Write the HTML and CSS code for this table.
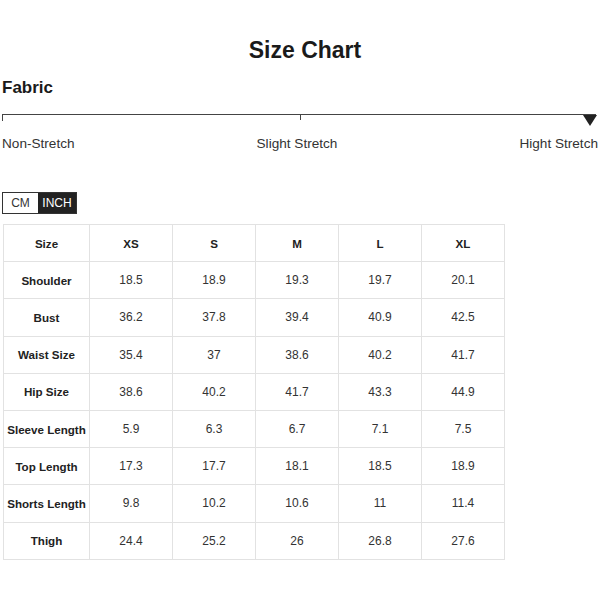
FILE: index.html
```html
<!DOCTYPE html>
<html>
<head>
<meta charset="utf-8">
<link rel="stylesheet" href="styles.css">
</head>
<body>
<div class="page">
  <h1 class="title">Size Chart</h1>
  <h2 class="fabric">Fabric</h2>
  <div class="scale">
    <span class="tick tick-left"></span>
    <span class="tick tick-mid"></span>
    <span class="marker"></span>
  </div>
  <div class="labels">
    <span>Non-Stretch</span>
    <span>Slight Stretch</span>
    <span>Hight Stretch</span>
  </div>
  <div class="toggle">
    <span class="opt">CM</span>
    <span class="opt active">INCH</span>
  </div>
  <table class="chart">
    <tr><th>Size</th><th>XS</th><th>S</th><th>M</th><th>L</th><th>XL</th></tr>
    <tr><th>Shoulder</th><td>18.5</td><td>18.9</td><td>19.3</td><td>19.7</td><td>20.1</td></tr>
    <tr><th>Bust</th><td>36.2</td><td>37.8</td><td>39.4</td><td>40.9</td><td>42.5</td></tr>
    <tr><th>Waist Size</th><td>35.4</td><td>37</td><td>38.6</td><td>40.2</td><td>41.7</td></tr>
    <tr><th>Hip Size</th><td>38.6</td><td>40.2</td><td>41.7</td><td>43.3</td><td>44.9</td></tr>
    <tr><th>Sleeve Length</th><td>5.9</td><td>6.3</td><td>6.7</td><td>7.1</td><td>7.5</td></tr>
    <tr><th>Top Length</th><td>17.3</td><td>17.7</td><td>18.1</td><td>18.5</td><td>18.9</td></tr>
    <tr><th>Shorts Length</th><td>9.8</td><td>10.2</td><td>10.6</td><td>11</td><td>11.4</td></tr>
    <tr><th>Thigh</th><td>24.4</td><td>25.2</td><td>26</td><td>26.8</td><td>27.6</td></tr>
  </table>
</div>
</body>
</html>
```
FILE: styles.css
```css
html, body {
  margin: 0;
  padding: 0;
  background: #fff;
}
body {
  font-family: "Liberation Sans", Arial, sans-serif;
  color: #222;
}
.page {
  padding: 0 2px;
}
.title {
  margin: 0;
  padding: 37px 0 0 10px;
  font-size: 23px;
  line-height: 26px;
  font-weight: bold;
  text-align: center;
  color: #1a1a1a;
}
.fabric {
  margin: 0;
  padding-top: 15px;
  font-size: 17px;
  line-height: 20px;
  font-weight: bold;
  color: #1a1a1a;
}
.scale {
  position: relative;
  margin-top: 16px;
  margin-right: 2px;
  height: 10px;
  border-top: 1px solid #444;
}
.tick {
  position: absolute;
  top: 0;
  width: 1px;
  height: 6px;
  background: #444;
}
.tick-left { left: 0; }
.tick-mid { left: 298px; height: 5px; }
.marker {
  position: absolute;
  right: -1px;
  top: 0;
  width: 0;
  height: 0;
  border-left: 7px solid transparent;
  border-right: 7px solid transparent;
  border-top: 11px solid #222;
}
.labels {
  display: flex;
  justify-content: space-between;
  margin-top: 11px;
  font-size: 13.6px;
  line-height: 16px;
  color: #333;
}
.toggle {
  display: inline-flex;
  margin-top: 40px;
  border: 1px solid #333;
  font-size: 12px;
  line-height: 20px;
}
.opt {
  display: block;
  width: 35px;
  text-align: center;
  color: #333;
  background: #fff;
}
.opt.active {
  width: 38px;
  background: #222;
  color: #fff;
}
.chart {
  margin-top: 10px;
  margin-left: 1px;
  border-collapse: collapse;
  table-layout: fixed;
  width: 502px;
}
.chart th, .chart td {
  border: 1px solid #e2e2e2;
  height: 36.2px;
  padding: 0;
  text-align: center;
  font-size: 12px;
  color: #333;
}
.chart th {
  font-weight: bold;
  font-size: 11.6px;
  color: #222;
}
.chart tr > :first-child {
  width: 85px;
}
```
